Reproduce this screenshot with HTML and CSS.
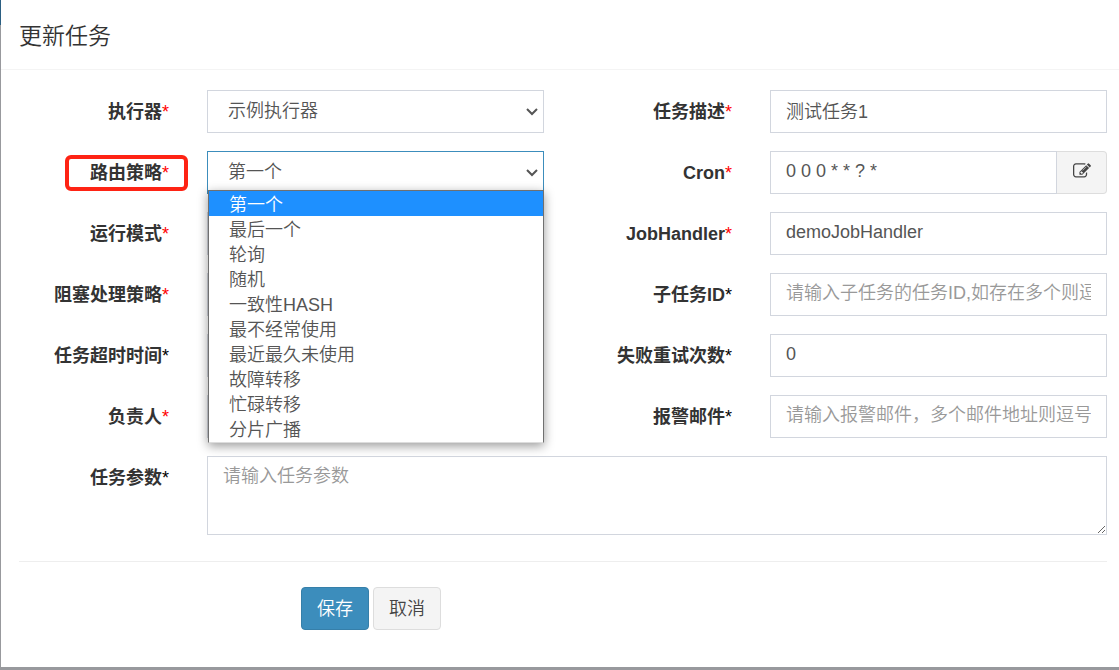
FILE: index.html
```html
<!DOCTYPE html>
<html lang="zh-CN">
<head>
  <meta charset="UTF-8">
  <title>更新任务</title>
  <link rel="stylesheet" href="styles.css">
</head>
<body>
  <div class="modal">
    <div class="modal-header">
      <h4 class="modal-title">更新任务</h4>
    </div>

    <form class="modal-body">
      <div class="form-grid">
        <label for="jobGroup">执行器<span class="required">*</span></label>
        <div class="field">
          <select class="form-control" id="jobGroup">
            <option>示例执行器</option>
          </select>
        </div>
        <label for="jobDesc">任务描述<span class="required">*</span></label>
        <input class="form-control" type="text" id="jobDesc" value="测试任务1">

        <label for="routeStrategy"><span class="marked">路由策略<span class="required">*</span></span></label>
        <div class="field open">
          <select class="form-control" id="routeStrategy">
            <option>第一个</option>
            <option>最后一个</option>
            <option>轮询</option>
            <option>随机</option>
            <option>一致性HASH</option>
            <option>最不经常使用</option>
            <option>最近最久未使用</option>
            <option>故障转移</option>
            <option>忙碌转移</option>
            <option>分片广播</option>
          </select>
          <ul class="option-list" role="listbox">
            <li class="selected" role="option" aria-selected="true">第一个</li>
            <li role="option">最后一个</li>
            <li role="option">轮询</li>
            <li role="option">随机</li>
            <li role="option">一致性HASH</li>
            <li role="option">最不经常使用</li>
            <li role="option">最近最久未使用</li>
            <li role="option">故障转移</li>
            <li role="option">忙碌转移</li>
            <li role="option">分片广播</li>
          </ul>
        </div>
        <label for="jobCron">Cron<span class="required">*</span></label>
        <div class="input-group">
          <input class="form-control" type="text" id="jobCron" value="0 0 0 * * ? *">
          <button type="button" class="btn-addon" aria-label="Cron">
            <svg viewBox="0 0 1792 1792" width="18" height="18"><path d="M888 1184l116-116-152-152-116 116v56h96v96h56zm440-720q-16-16-33 1l-350 350q-17 17-1 33t33-1l350-350q17-17 1-33zm80 594v190q0 119-84.500 203.500t-203.500 84.500h-832q-119 0-203.500-84.500t-84.500-203.500v-832q0-119 84.500-203.500t203.500-84.500h832q63 0 117 25 15 7 18 23 3 17-9 29l-49 49q-14 14-32 8-23-6-45-6h-832q-66 0-113 47t-47 113v832q0 66 47 113t113 47h832q66 0 113-47t47-113v-126q0-13 9-22l64-64q15-15 35-7t20 29zm-96-738l288 288-672 672h-288v-288zm444 132l-92 92-288-288 92-92q28-28 68-28t68 28l152 152q28 28 28 68t-28 68z"/></svg>
          </button>
        </div>

        <label for="glueType">运行模式<span class="required">*</span></label>
        <div class="field">
          <select class="form-control" id="glueType"></select>
        </div>
        <label for="executorHandler">JobHandler<span class="required">*</span></label>
        <input class="form-control" type="text" id="executorHandler" value="demoJobHandler">

        <label for="blockStrategy">阻塞处理策略<span class="required">*</span></label>
        <div class="field">
          <select class="form-control" id="blockStrategy"></select>
        </div>
        <label for="childJobId">子任务ID<span class="optional">*</span></label>
        <input class="form-control" type="text" id="childJobId" placeholder="请输入子任务的任务ID,如存在多个则逗号分隔">

        <label for="timeout">任务超时时间<span class="optional">*</span></label>
        <input class="form-control" type="text" id="timeout">
        <label for="failRetry">失败重试次数<span class="optional">*</span></label>
        <input class="form-control" type="text" id="failRetry" value="0">

        <label for="author">负责人<span class="required">*</span></label>
        <input class="form-control" type="text" id="author">
        <label for="alarmEmail">报警邮件<span class="optional">*</span></label>
        <input class="form-control" type="text" id="alarmEmail" placeholder="请输入报警邮件，多个邮件地址则逗号分隔">

        <label for="executorParam">任务参数<span class="optional">*</span></label>
        <textarea class="form-control" id="executorParam" rows="3" placeholder="请输入任务参数"></textarea>
      </div>

      <hr>

      <div class="buttons">
        <button type="button" class="btn btn-primary">保存</button>
        <button type="button" class="btn btn-default">取消</button>
      </div>
    </form>
  </div>
</body>
</html>
```

FILE: styles.css
```css
* {
  box-sizing: border-box;
}

body {
  margin: 0;
  padding: 0 0 3px 1px;
  background: linear-gradient(#2b5f82 0, #2b5f82 25px, #98999d 25px);
  color: #333;
  font-family: "Liberation Sans", "Noto Sans CJK SC", sans-serif;
  font-size: 18px;
  line-height: 25px;
}

.modal {
  background: #fff;
}

.modal-header {
  padding: 20px 18px 17px;
  border-bottom: 1px solid #f4f4f4;
}

.modal-title {
  margin: 0;
  font-size: 23px;
  font-weight: 350;
  line-height: 32px;
}

.modal-body {
  padding: 20px 12px 37px 18px;
}

.form-grid {
  display: grid;
  grid-template-columns: 150px 1fr 150px 1fr;
  gap: 18px 38px;
}

label {
  height: 43px;
  line-height: 44px;
  text-align: right;
  font-weight: bold;
  white-space: nowrap;
}

.required,
.optional {
  font-weight: normal;
  color: red;
}

.optional {
  color: #000;
}

/* red frame round the label */
.marked {
  position: relative;
}

.marked::after {
  content: "";
  position: absolute;
  top: -8px;
  bottom: -8px;
  left: -25px;
  right: -19px;
  border: 4px solid #fe2314;
  border-radius: 6px;
}

.form-control {
  display: block;
  width: 100%;
  min-width: 0;
  height: 43px;
  padding: 0 15px 3px;
  border: 1px solid #d2d6de;
  border-radius: 0;
  background-color: #fff;
  color: #555;
  font-family: inherit;
  font-size: 18px;
  font-weight: 350;
  outline: none;
}

.form-control::placeholder {
  color: #999;
}

select.form-control {
  appearance: none;
  padding: 0 30px 2px 20px;
  background-image: url("data:image/svg+xml,%3Csvg xmlns='http://www.w3.org/2000/svg' width='12' height='8'%3E%3Cpath d='M1 1l5 5 5-5' fill='none' stroke='%23555' stroke-width='2'/%3E%3C/svg%3E");
  background-repeat: no-repeat;
  background-position: right 5px center;
}

textarea.form-control {
  grid-column: 2 / -1;
  height: auto;
  padding: 9px 15px 5px;
  line-height: 21px;
  resize: vertical;
}

.field {
  position: relative;
}

.open {
  z-index: 1;
}

.open .form-control {
  border-color: #3c8dbc;
}

.option-list {
  position: absolute;
  top: 39px;
  left: 1px;
  right: 0;
  margin: 0;
  padding: 0 0 1px;
  list-style: none;
  background: #fff;
  border: 1px solid #707070;
  border-bottom-color: #ddd;
  box-shadow: 0 3px 10px rgba(0, 0, 0, 0.4);
  color: #555;
  font-weight: 350;
}

.option-list li {
  height: 25px;
  padding-left: 20px;
  line-height: 28px;
}

.option-list .selected {
  background: #1e90ff;
  color: #fff;
}

.input-group {
  display: flex;
}

.btn-addon {
  display: flex;
  align-items: center;
  justify-content: center;
  flex: none;
  width: 50px;
  padding: 0 0 3px;
  border: 1px solid #ddd;
  border-left: 0;
  border-radius: 0 4px 4px 0;
  background: #f4f4f4;
}

.btn-addon svg {
  fill: #444;
}

hr {
  margin: 26px 0 25px;
  border: 0;
  border-top: 1px solid #eee;
}

.buttons {
  display: flex;
  gap: 4px;
  padding-left: 282px;
}

.btn {
  height: 43px;
  padding: 0 15px 3px;
  border: 1px solid #ddd;
  border-radius: 4px;
  font-family: inherit;
  font-size: 18px;
  font-weight: 350;
  cursor: pointer;
}

.btn-primary {
  background: #3c8dbc;
  border-color: #367fa9;
  color: #fff;
}

.btn-default {
  background: #f4f4f4;
  color: #444;
}
```
